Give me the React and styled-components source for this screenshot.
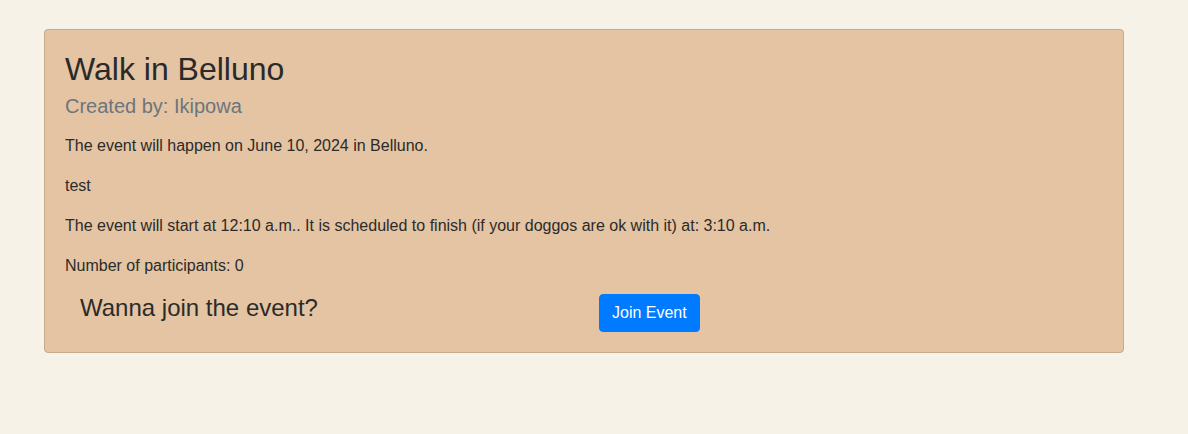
import React from 'react'
import styled, { createGlobalStyle } from 'styled-components'

const GlobalStyle = createGlobalStyle`
  html, body {
    margin: 0;
    padding: 0;
    background: #f6f2e8;
    font-family: "Liberation Sans", Arial, sans-serif;
    color: #212529;
  }
`

const Page = styled.div`
  padding: 29px 0 0 44px;
`

const Card = styled.div`
  width: 1080px;
  box-sizing: border-box;
  background: #e4c4a2;
  border: 1px solid #c8a988;
  border-radius: 4px;
  padding: 20px;
`

const Title = styled.h1`
  margin: 0 0 6px;
  font-size: 32px;
  font-weight: 400;
  line-height: 1.2;
  color: #2a2a2a;
`

const Subtitle = styled.h2`
  margin: 0 0 16px;
  font-size: 20px;
  font-weight: 400;
  line-height: 1.2;
  color: #6c757d;
`

const Text = styled.p`
  margin: 0 0 16px;
  font-size: 16px;
  line-height: 24px;
  color: #2b2b2b;
`

const JoinRow = styled.div`
  display: grid;
  grid-template-columns: 1fr 1fr;
  align-items: start;
`

const Col = styled.div`
  padding: 0 15px;
`

const JoinHeading = styled.h4`
  margin: 0;
  font-size: 24px;
  font-weight: 400;
  line-height: 1.2;
  color: #2b2b2b;
`

const Button = styled.button`
  font-family: inherit;
  font-size: 16px;
  line-height: 24px;
  padding: 6px 12px;
  color: #fff;
  background: #007bff;
  border: 1px solid #007bff;
  border-radius: 4px;
  cursor: pointer;
`

const App = () => {
  return (
    <Page>
      <GlobalStyle />
      <Card>
        <Title>Walk in Belluno</Title>
        <Subtitle>Created by: Ikipowa</Subtitle>
        <Text>The event will happen on June 10, 2024 in Belluno.</Text>
        <Text>test</Text>
        <Text>
          The event will start at 12:10 a.m.. It is scheduled to finish (if your doggos are ok with it) at: 3:10 a.m.
        </Text>
        <Text>Number of participants: 0</Text>
        <JoinRow>
          <Col>
            <JoinHeading>Wanna join the event?</JoinHeading>
          </Col>
          <Col>
            <Button>Join Event</Button>
          </Col>
        </JoinRow>
      </Card>
    </Page>
  )
}

export default App
